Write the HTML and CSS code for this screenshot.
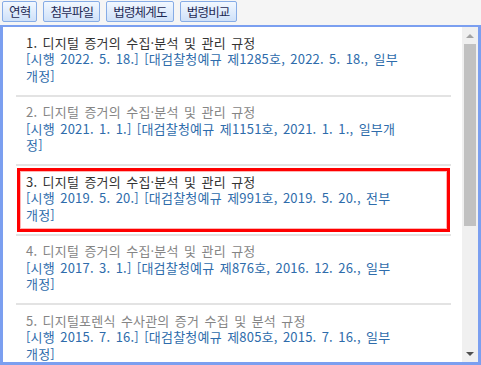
FILE: index.html
```html
<!DOCTYPE html>
<html lang="ko">
<head>
  <meta charset="UTF-8">
  <title>연혁</title>
  <link rel="stylesheet" href="styles.css">
</head>
<body>
  <div class="toolbar">
    <button class="tab">연혁</button>
    <button class="tab">첨부파일</button>
    <button class="tab">법령체계도</button>
    <button class="tab">법령비교</button>
  </div>

  <div class="frame">
    <ul class="history">
      <li>
        <div class="entry">
          <div class="title">1. 디지털 증거의 수집·분석 및 관리 규정</div>
          <div class="info">[시행 2022. 5. 18.] [대검찰청예규 제1285호, 2022. 5. 18., 일부 개정]</div>
        </div>
      </li>
      <li>
        <div class="entry old">
          <div class="title">2. 디지털 증거의 수집·분석 및 관리 규정</div>
          <div class="info">[시행 2021. 1. 1.] [대검찰청예규 제1151호, 2021. 1. 1., 일부개정]</div>
        </div>
      </li>
      <li>
        <div class="entry current">
          <div class="title">3. 디지털 증거의 수집·분석 및 관리 규정</div>
          <div class="info">[시행 2019. 5. 20.] [대검찰청예규 제991호, 2019. 5. 20., 전부 개정]</div>
        </div>
      </li>
      <li>
        <div class="entry old">
          <div class="title">4. 디지털 증거의 수집·분석 및 관리 규정</div>
          <div class="info">[시행 2017. 3. 1.] [대검찰청예규 제876호, 2016. 12. 26., 일부 개정]</div>
        </div>
      </li>
      <li>
        <div class="entry old">
          <div class="title">5. 디지털포렌식 수사관의 증거 수집 및 분석 규정</div>
          <div class="info">[시행 2015. 7. 16.] [대검찰청예규 제805호, 2015. 7. 16., 일부 개정]</div>
        </div>
      </li>
    </ul>

    <div class="scrollbar">
      <div class="arrow up"></div>
      <div class="track">
        <div class="thumb"></div>
      </div>
      <div class="arrow down"></div>
    </div>
  </div>
</body>
</html>
```

FILE: styles.css
```css
body {
  margin: 0;
  background: #f5f5f5;
  font-family: "Noto Sans CJK KR", "Noto Sans", sans-serif;
  font-size: 13px;
  color: #333;
}

.toolbar {
  display: flex;
  gap: 6px;
  height: 25px;
  padding: 1px 0 0 2px;
  box-sizing: border-box;
}

.tab {
  height: 21px;
  padding: 0 6px;
  border: 1px solid #86ace6;
  border-radius: 2px;
  background: linear-gradient(#f2f8ff, #cfe1f9);
  font-family: inherit;
  font-size: 12.5px;
  letter-spacing: -0.8px;
  line-height: 18px;
  color: #1e2a55;
}

.frame {
  display: flex;
  height: 340px;
  box-sizing: border-box;
  border: 3px solid #7b9ff0;
  border-top-width: 2px;
  background: #fff;
}

.history {
  flex: 1;
  margin: 0;
  padding: 0 11px 0 13px;
  list-style: none;
  overflow: hidden;
}

.history li {
  padding: 2px 1px;
  border-bottom: 2px solid #e3e3e3;
}

.entry {
  border: 3px solid transparent;
  padding: 2.5px 45px 5.5px 6px;
  line-height: 16.5px;
  letter-spacing: 0.2px;
  word-spacing: 1.5px;
}

.entry.current {
  border-color: #ff0000;
  box-shadow: inset 0 0 0 1px #ffb4b4;
}

.title {
  color: #333;
}

.entry.old .title {
  color: #858585;
}

.info {
  color: #2e6cab;
}

.scrollbar {
  width: 16px;
  display: flex;
  flex-direction: column;
  background: #f0f0f0;
}

.arrow {
  height: 17px;
  display: flex;
  align-items: center;
  justify-content: center;
}

.arrow::before {
  content: "";
  border-left: 4px solid transparent;
  border-right: 4px solid transparent;
}

.arrow.up::before {
  border-bottom: 4px solid #a3a3a3;
}

.arrow.down::before {
  border-top: 4px solid #505050;
}

.track {
  flex: 1;
  padding: 0 2px;
}

.thumb {
  height: 182px;
  background: #c1c1c1;
}
```
